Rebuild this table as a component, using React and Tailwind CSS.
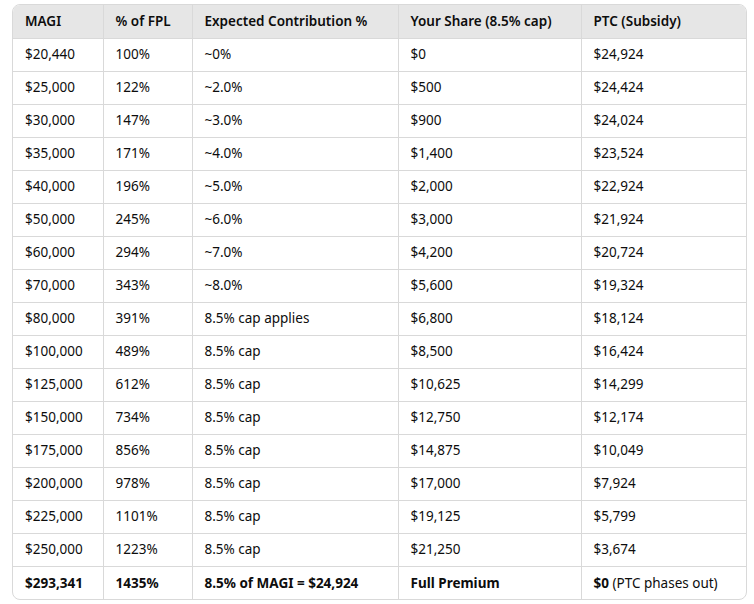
const rows = [
  ['$20,440', '100%', '~0%', '$0', '$24,924'],
  ['$25,000', '122%', '~2.0%', '$500', '$24,424'],
  ['$30,000', '147%', '~3.0%', '$900', '$24,024'],
  ['$35,000', '171%', '~4.0%', '$1,400', '$23,524'],
  ['$40,000', '196%', '~5.0%', '$2,000', '$22,924'],
  ['$50,000', '245%', '~6.0%', '$3,000', '$21,924'],
  ['$60,000', '294%', '~7.0%', '$4,200', '$20,724'],
  ['$70,000', '343%', '~8.0%', '$5,600', '$19,324'],
  ['$80,000', '391%', '8.5% cap applies', '$6,800', '$18,124'],
  ['$100,000', '489%', '8.5% cap', '$8,500', '$16,424'],
  ['$125,000', '612%', '8.5% cap', '$10,625', '$14,299'],
  ['$150,000', '734%', '8.5% cap', '$12,750', '$12,174'],
  ['$175,000', '856%', '8.5% cap', '$14,875', '$10,049'],
  ['$200,000', '978%', '8.5% cap', '$17,000', '$7,924'],
  ['$225,000', '1101%', '8.5% cap', '$19,125', '$5,799'],
  ['$250,000', '1223%', '8.5% cap', '$21,250', '$3,674'],
];

const headers = ['MAGI', '% of FPL', 'Expected Contribution %', 'Your Share (8.5% cap)', 'PTC (Subsidy)'];
const widths = ['w-[90px]', 'w-[89px]', 'w-[206px]', 'w-[183px]', 'w-[165px]'];

const cell = 'h-[33px] px-[12px] border-r border-b border-[#d9d9d9] last:border-r-0 align-middle';

export default function App() {
  return (
    <div className="w-[754px] h-[604px] bg-white pt-[4px] pl-[12px]" style={{ fontFamily: '"Noto Sans", "Open Sans", sans-serif' }}>
      <div className="w-[735px] border border-[#d9d9d9] rounded-[8px] overflow-hidden text-[13.5px] text-[#0d0d0d]">
        <table className="table-fixed w-full border-collapse">
          <colgroup>
            {widths.map((w, i) => <col key={i} className={w} />)}
          </colgroup>
          <thead>
            <tr className="bg-[#e6e6e6]">
              {headers.map(h => (
                <th key={h} className={`${cell} text-left font-semibold`}>{h}</th>
              ))}
            </tr>
          </thead>
          <tbody>
            {rows.map(r => (
              <tr key={r[0]}>
                {r.map((c, i) => <td key={i} className={cell}>{c}</td>)}
              </tr>
            ))}
            <tr>
              <td className={`${cell} border-b-0 font-bold`}>$293,341</td>
              <td className={`${cell} border-b-0 font-bold`}>1435%</td>
              <td className={`${cell} border-b-0 font-bold`}>8.5% of MAGI = $24,924</td>
              <td className={`${cell} border-b-0 font-bold`}>Full Premium</td>
              <td className={`${cell} border-b-0`}><span className="font-bold">$0</span> (PTC phases out)</td>
            </tr>
          </tbody>
        </table>
      </div>
    </div>
  );
}
